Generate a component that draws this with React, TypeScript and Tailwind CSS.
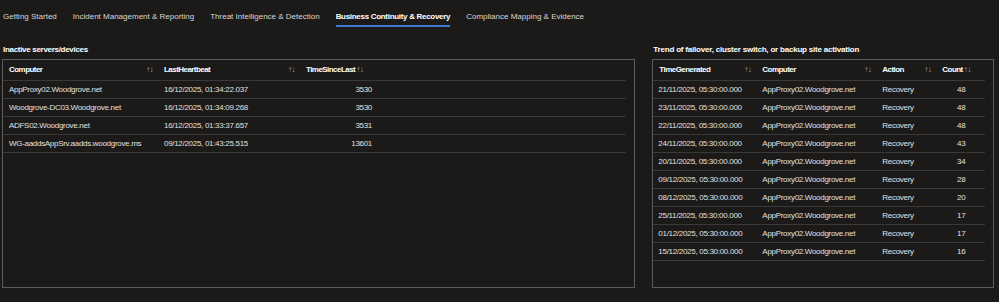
import React from 'react';

const tabs = [
  'Getting Started',
  'Incident Management & Reporting',
  'Threat Intelligence & Detection',
  'Business Continuity & Recovery',
  'Compliance Mapping & Evidence',
];

const inactive = [
  ['AppProxy02.Woodgrove.net', '16/12/2025, 01:34:22.037', '3530'],
  ['Woodgrove-DC03.Woodgrove.net', '16/12/2025, 01:34:09.268', '3530'],
  ['ADFS02.Woodgrove.net', '16/12/2025, 01:33:37.657', '3531'],
  ['WG-aaddsAppSrv.aadds.woodgrove.ms', '09/12/2025, 01:43:25.515', '13601'],
];

const trend = [
  ['21/11/2025', '48'],
  ['23/11/2025', '48'],
  ['22/11/2025', '48'],
  ['24/11/2025', '43'],
  ['20/11/2025', '34'],
  ['09/12/2025', '28'],
  ['08/12/2025', '20'],
  ['25/11/2025', '17'],
  ['01/12/2025', '17'],
  ['15/12/2025', '16'],
];

const Sort = () => (
  <span className="text-[8px] text-[#a8a8a8] tracking-[-0.5px] font-normal pl-[1px]">↑↓</span>
);

const HeadCell = ({ label, w, inline }: { label: string; w: string; inline?: boolean }) => (
  <div className={`${w} flex items-center pl-[6px] pr-[5px] ${inline ? '' : 'justify-between'}`}>
    <span className="font-bold text-white tracking-[-0.55px]">{label}</span>
    <Sort />
  </div>
);

export default function App() {
  return (
    <div
      className="w-[999px] h-[302px] bg-[#1b1a19] text-[#e0e0e0] text-[8px] overflow-hidden"
      style={{ fontFamily: '"Liberation Sans", Arial, sans-serif' }}
    >
      {/* Tabs */}
      <div className="flex pl-[3px] h-[27px] items-end">
        {tabs.map((t, i) => {
          const active = i === 3;
          return (
            <div
              key={t}
              className={`mr-[16px] pb-[3px] leading-[10px] border-b-2 ${
                active
                  ? 'border-[#3b7bd0] text-white font-bold tracking-[-0.3px]'
                  : 'border-transparent text-[#d8d8d8]'
              }`}
            >
              {t}
            </div>
          );
        })}
      </div>

      <div className="flex pl-[2px] pr-[5px] mt-[18px] gap-[17px]">
        {/* Left panel */}
        <div className="w-[634px]">
          <div className="font-bold text-white pl-[1px] h-[14px] leading-[10px] tracking-[-0.3px]">
            Inactive servers/devices
          </div>
          <div className="h-[229px] border border-[#5c5b5a] pr-[8px] tracking-[-0.3px]">
            <div className="flex h-[21px] border-b border-[#3a3938]">
              <HeadCell label="Computer" w="w-[155px]" />
              <HeadCell label="LastHeartbeat" w="w-[142px]" />
              <HeadCell label="TimeSinceLast" w="w-[75px]" inline />
            </div>
            {inactive.map((r) => (
              <div key={r[0]} className="flex h-[18px] items-center border-b border-[#3a3938]">
                <div className="w-[155px] pl-[6px]">{r[0]}</div>
                <div className="w-[142px] pl-[6px]">{r[1]}</div>
                <div className="w-[72px] text-right">{r[2]}</div>
              </div>
            ))}
          </div>
        </div>

        {/* Right panel */}
        <div className="w-[342px]">
          <div className="font-bold text-white pl-[1px] h-[14px] leading-[10px] tracking-[-0.2px]">
            Trend of failover, cluster switch, or backup site activation
          </div>
          <div className="h-[229px] border border-[#5c5b5a] pr-[8px] tracking-[-0.3px]">
            <div className="flex h-[21px] border-b border-[#3a3938]">
              <HeadCell label="TimeGenerated" w="w-[103px]" />
              <HeadCell label="Computer" w="w-[120px]" />
              <HeadCell label="Action" w="w-[60px]" />
              <HeadCell label="Count" w="w-[40px]" inline />
            </div>
            {trend.map((r, i) => (
              <div key={i} className="flex h-[18px] items-center border-b border-[#3a3938]">
                <div className="w-[103px] pl-[5px]">{r[0]}, 05:30:00.000</div>
                <div className="w-[120px] pl-[6px]">AppProxy02.Woodgrove.net</div>
                <div className="w-[60px] pl-[6px]">Recovery</div>
                <div className="w-[29px] text-right">{r[1]}</div>
              </div>
            ))}
          </div>
        </div>
      </div>
    </div>
  );
}
